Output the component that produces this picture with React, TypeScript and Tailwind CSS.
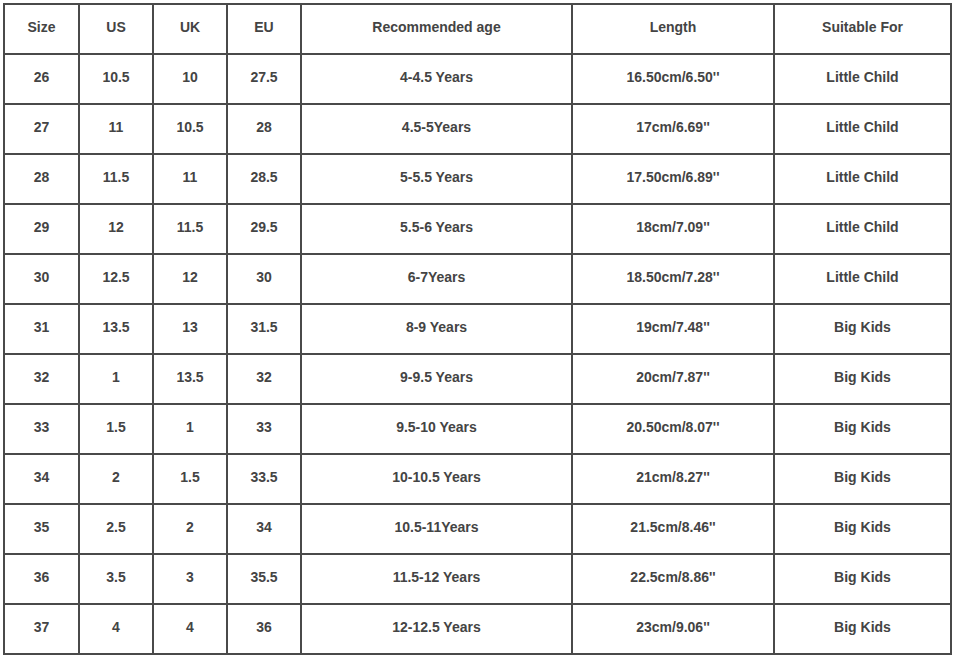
import React from "react";

const header = ["Size", "US", "UK", "EU", "Recommended age", "Length", "Suitable For"];
const rows: string[][] = [
  ["26", "10.5", "10", "27.5", "4-4.5 Years", "16.50cm/6.50''", "Little Child"],
  ["27", "11", "10.5", "28", "4.5-5Years", "17cm/6.69''", "Little Child"],
  ["28", "11.5", "11", "28.5", "5-5.5 Years", "17.50cm/6.89''", "Little Child"],
  ["29", "12", "11.5", "29.5", "5.5-6 Years", "18cm/7.09''", "Little Child"],
  ["30", "12.5", "12", "30", "6-7Years", "18.50cm/7.28''", "Little Child"],
  ["31", "13.5", "13", "31.5", "8-9 Years", "19cm/7.48''", "Big Kids"],
  ["32", "1", "13.5", "32", "9-9.5 Years", "20cm/7.87''", "Big Kids"],
  ["33", "1.5", "1", "33", "9.5-10 Years", "20.50cm/8.07''", "Big Kids"],
  ["34", "2", "1.5", "33.5", "10-10.5 Years", "21cm/8.27''", "Big Kids"],
  ["35", "2.5", "2", "34", "10.5-11Years", "21.5cm/8.46''", "Big Kids"],
  ["36", "3.5", "3", "35.5", "11.5-12 Years", "22.5cm/8.86''", "Big Kids"],
  ["37", "4", "4", "36", "12-12.5 Years", "23cm/9.06''", "Big Kids"],
];

export default function App() {
  const all = [header, ...rows];
  return (
    <div className="w-[956px] h-[657px] bg-white pt-[3px] pl-[3px]" style={{ fontFamily: '"Liberation Sans", Arial, sans-serif' }}>
      <div className="grid w-[949px] grid-cols-[73px_72px_72px_72px_269px_200px_175px] auto-rows-[48px] gap-[2px] p-[2px] bg-[#4a4a4a]">
        {all.map((r, i) =>
          r.map((c, j) => (
            <div
              key={`${i}-${j}`}
              className="flex items-center justify-center bg-white pb-[3px] text-[14px] font-bold text-[#444444]"
            >
              {c}
            </div>
          ))
        )}
      </div>
    </div>
  );
}
